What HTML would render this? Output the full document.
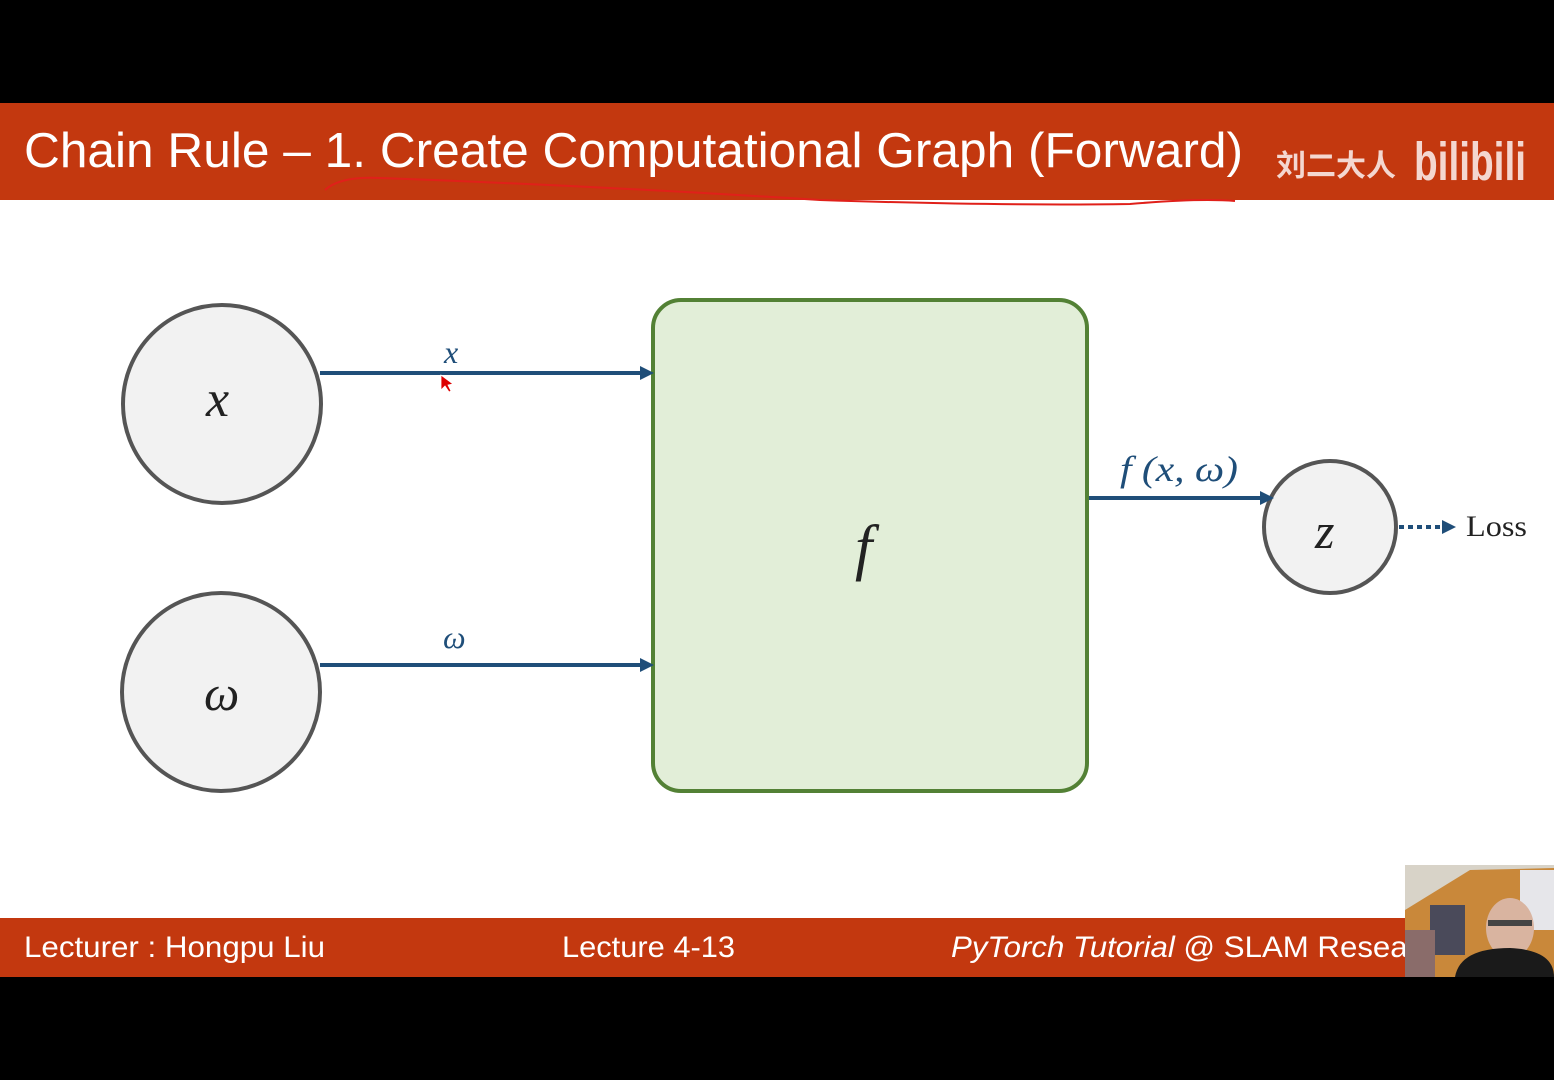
<!DOCTYPE html>
<html><head><meta charset="utf-8"><style>
html,body{margin:0;padding:0;background:#000;}
svg{display:block}
</style></head><body>
<svg width="1554" height="1080" viewBox="0 0 1554 1080" xmlns="http://www.w3.org/2000/svg">
<rect width="1554" height="1080" fill="#000"/>
<rect x="0" y="103" width="1554" height="97" fill="#C3380F"/>
<rect x="0" y="200" width="1554" height="718" fill="#fff"/>
<rect x="0" y="918" width="1554" height="59" fill="#C3380F"/>
<text x="24" y="167" font-family="Liberation Sans, sans-serif" font-size="49" fill="#fff" textLength="1219" lengthAdjust="spacingAndGlyphs">Chain Rule – 1. Create Computational Graph (Forward)</text>
<path d="M325 190 Q340 176 380 178 Q600 186 820 200 Q1000 206 1130 204 Q1200 198 1235 201" stroke="#e0201a" stroke-width="2" fill="none"/>
<text x="1276" y="176" font-family="Liberation Sans, Noto Sans CJK SC, sans-serif" font-size="30" font-weight="bold" fill="#f4d7d0">刘二大人</text>
<text x="1414" y="180" font-family="Liberation Sans, sans-serif" font-size="54" font-weight="bold" fill="#f4d7d0" textLength="112" lengthAdjust="spacingAndGlyphs">bilibili</text>
<g stroke="#555" stroke-width="4" fill="#f2f2f2">
<circle cx="222" cy="404" r="99"/>
<circle cx="221" cy="692" r="99"/>
<circle cx="1330" cy="527" r="66"/>
</g>
<rect x="653" y="300" width="434" height="491" rx="28" fill="#e2eed8" stroke="#538135" stroke-width="4"/>
<g font-family="Liberation Serif, serif" font-style="italic" fill="#222">
<text x="206" y="416" font-size="52">x</text>
<text x="204" y="710" font-size="50">ω</text>
<text x="1315" y="548" font-size="50">z</text>
<text x="855" y="568" font-size="62">f</text>
</g>
<g stroke="#1f4e79" stroke-width="4" fill="#1f4e79">
<line x1="320" y1="373" x2="642" y2="373"/><polygon points="654,373 640,366 640,380" stroke="none"/>
<line x1="320" y1="665" x2="642" y2="665"/><polygon points="654,665 640,658 640,672" stroke="none"/>
<line x1="1089" y1="498" x2="1262" y2="498"/><polygon points="1274,498 1260,491 1260,505" stroke="none"/>
<line x1="1399" y1="527" x2="1442" y2="527" stroke-dasharray="5,4"/><polygon points="1456,527 1442,520 1442,534" stroke="none"/>
</g>
<g font-family="Liberation Serif, serif" font-style="italic" fill="#1f4e79">
<text x="444" y="363" font-size="32">x</text>
<text x="443" y="648" font-size="32">ω</text>
<text x="1120" y="481" font-size="36" textLength="118" lengthAdjust="spacingAndGlyphs">f (x, ω)</text>
</g>
<text x="1466" y="536" font-family="Liberation Serif, serif" font-size="30" fill="#222" textLength="61" lengthAdjust="spacingAndGlyphs">Loss</text>
<polygon points="441,375 441,390 445,386 449,392 451,391 448,385 453,384" fill="#d00" stroke="#fff" stroke-width="0.8"/>
<g font-family="Liberation Sans, sans-serif" font-size="30" fill="#fff">
<text x="24" y="957" textLength="301" lengthAdjust="spacingAndGlyphs">Lecturer : Hongpu Liu</text>
<text x="562" y="957" textLength="173" lengthAdjust="spacingAndGlyphs">Lecture 4-13</text>
<text x="951" y="957" textLength="500" lengthAdjust="spacingAndGlyphs"><tspan font-style="italic">PyTorch Tutorial</tspan> @ SLAM Research</text>
</g>
<rect x="1405" y="865" width="149" height="112" fill="#d8d3c8"/>
<polygon points="1405,910 1470,870 1554,868 1554,977 1405,977" fill="#c9883a"/>
<rect x="1430" y="905" width="35" height="50" fill="#4a4a5a"/>
<rect x="1405" y="930" width="30" height="47" fill="#8a6c6a"/>
<rect x="1520" y="870" width="34" height="60" fill="#e6e6ea"/>
<ellipse cx="1510" cy="928" rx="24" ry="30" fill="#d9b4a0"/>
<rect x="1488" y="920" width="44" height="6" fill="#444"/>
<path d="M1455 977 Q1460 948 1510 948 Q1554 950 1554 977 Z" fill="#1a1a1a"/>
</svg>
</body></html>
